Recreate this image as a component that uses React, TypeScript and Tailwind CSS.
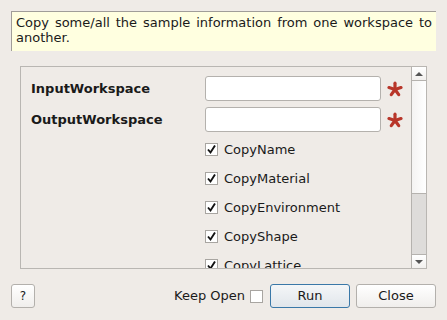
import React from 'react'

const font = { fontFamily: '"DejaVu Sans", Verdana, sans-serif' }

function Asterisk() {
  // five lobed red asterisk used for mandatory fields
  const arms = [-90, -18, 54, 126, 198]
  return (
    <svg width="16" height="16" viewBox="0 0 16 16" className="shrink-0">
      {arms.map(a => {
        const r = (a * Math.PI) / 180
        return (
          <line
            key={a}
            x1="8"
            y1="8.5"
            x2={8 + Math.cos(r) * 6.3}
            y2={8.5 + Math.sin(r) * 6.3}
            stroke="#b8362a"
            strokeWidth="3.2"
            strokeLinecap="round"
          />
        )
      })}
    </svg>
  )
}

function Check({ checked }: { checked: boolean }) {
  return (
    <div className="w-[13px] h-[13px] border border-[#a8a5a1] bg-white flex items-center justify-center shrink-0">
      {checked && (
        <svg width="11" height="11" viewBox="0 0 11 11">
          <path d="M2 5.5 L4.5 8.5 L9 1.5" fill="none" stroke="#111" strokeWidth="1.9" strokeLinejoin="miter" />
        </svg>
      )}
    </div>
  )
}

function Field({ label }: { label: string }) {
  return (
    <div className="flex items-center h-[25px]">
      <div className="w-[184px] pl-[10px] font-bold text-[13px] text-[#1a1a1a]">{label}</div>
      <div className="w-[176px] h-[25px] bg-white border border-[#b4b1ad] rounded-[3px]" />
      <div className="ml-[6px]">
        <Asterisk />
      </div>
    </div>
  )
}

function Option({ label }: { label: string }) {
  return (
    <div className="flex items-center h-[13px] pl-[184px] gap-[6px]">
      <Check checked />
      <span className="text-[13px] text-[#1a1a1a] leading-none">{label}</span>
    </div>
  )
}

function ScrollBar() {
  return (
    <div className="w-[15px] border-l border-[#b5b2ae] flex flex-col shrink-0">
      <div className="h-[14px] border-b border-[#b5b2ae] bg-gradient-to-b from-white to-[#f2f0ee] flex items-center justify-center">
        <div className="w-0 h-0 border-l-[4px] border-r-[4px] border-b-[4px] border-l-transparent border-r-transparent border-b-[#555]" />
      </div>
      <div className="h-[113px] border-b border-[#b5b2ae] bg-gradient-to-r from-[#f4f3f2] to-white" />
      <div className="flex-1 bg-[#dedcda]" />
      <div className="h-[14px] border-t border-[#b5b2ae] bg-gradient-to-b from-white to-[#f2f0ee] flex items-center justify-center">
        <div className="w-0 h-0 border-l-[4px] border-r-[4px] border-t-[4px] border-l-transparent border-r-transparent border-t-[#555]" />
      </div>
    </div>
  )
}

function Button({ children, primary }: { children: React.ReactNode; primary?: boolean }) {
  return (
    <button
      className={
        primary
          ? 'w-[80px] h-[24px] rounded-[3px] border border-[#3a78a8] bg-gradient-to-b from-[#f4f6f8] to-[#e1e6eb] text-[13px] text-[#1a1a1a]'
          : 'w-[80px] h-[24px] rounded-[3px] border border-[#b3b0ac] bg-gradient-to-b from-white to-[#f0eeec] text-[13px] text-[#1a1a1a]'
      }
    >
      {children}
    </button>
  )
}

export default function App() {
  return (
    <div className="w-[447px] h-[320px] bg-[#efebe7] flex flex-col pt-[11px] overflow-hidden" style={font}>
      <div className="mx-[11px] h-[40px] bg-[#ffffe0] border-t border-l border-[#a09d99] px-[4px] pt-[3px]">
        <p className="text-[13px] leading-[15px] text-[#1a1a1a] text-justify">
          Copy some/all the sample information from one workspace to another.
        </p>
      </div>

      <div className="mt-[15px] mx-[20px] h-[203px] border border-[#b9b6b2] flex overflow-hidden">
        <div className="flex-1 flex flex-col pt-[9px] gap-[6px] overflow-hidden">
          <Field label="InputWorkspace" />
          <Field label="OutputWorkspace" />
          <div className="flex flex-col gap-[16px] mt-[5px]">
            <Option label="CopyName" />
            <Option label="CopyMaterial" />
            <Option label="CopyEnvironment" />
            <Option label="CopyShape" />
            <Option label="CopyLattice" />
          </div>
        </div>
        <ScrollBar />
      </div>

      <div className="flex items-center h-[24px] mt-[15px] px-[11px]">
        <button className="w-[24px] h-[24px] rounded-[3px] border border-[#b3b0ac] bg-gradient-to-b from-white to-[#f0eeec] text-[12px] text-[#1a1a1a]">
          ?
        </button>
        <div className="flex-1" />
        <span className="text-[13px] text-[#1a1a1a] mr-[5px]">Keep Open</span>
        <div className="w-[13px] h-[13px] border border-[#a8a5a1] bg-white mr-[7px]" />
        <Button primary>Run</Button>
        <div className="w-[6px]" />
        <Button>Close</Button>
      </div>
    </div>
  )
}
